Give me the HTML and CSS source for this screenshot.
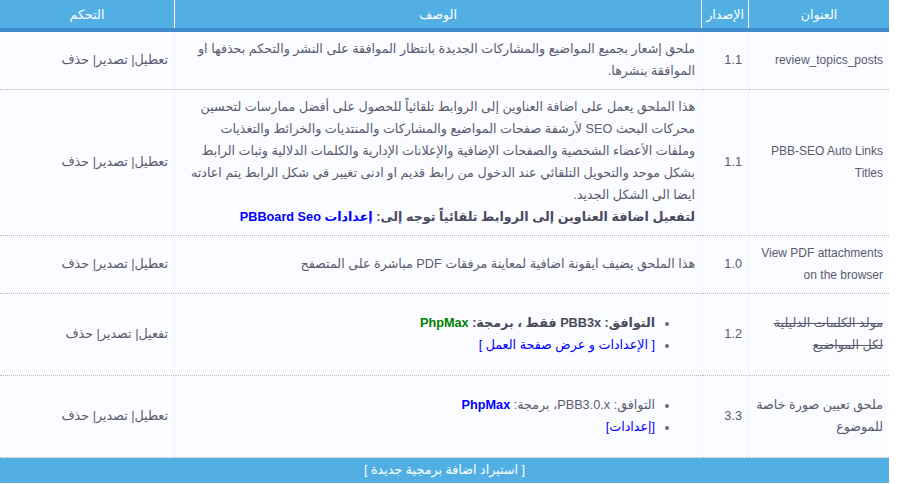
FILE: index.html
```html
<!DOCTYPE html>
<html lang="ar" dir="rtl">

<head>
    <meta charset="UTF-8">
    <title>الإضافات البرمجية</title>
    <link rel="stylesheet" href="styles.css">
</head>

<body>
    <table class="plugins">
        <thead>
            <tr>
                <th class="col-title">العنوان</th>
                <th class="col-version">الإصدار</th>
                <th class="col-desc">الوصف</th>
                <th class="col-control">التحكم</th>
            </tr>
        </thead>
        <tbody>
            <tr>
                <td class="en">review_topics_posts</td>
                <td>1.1</td>
                <td>ملحق إشعار بجميع المواضيع والمشاركات الجديدة بانتظار الموافقة على النشر والتحكم بحذفها او الموافقة بنشرها.</td>
                <td class="control"><a href="#">تعطيل</a>| <a href="#">تصدير</a>| <a href="#">حذف</a></td>
            </tr>
            <tr>
                <td class="en">PBB-SEO Auto Links Titles</td>
                <td>1.1</td>
                <td>هذا الملحق يعمل على اضافة العناوين إلى الروابط تلقائياً للحصول على أفضل ممارسات لتحسين محركات البحث SEO لأرشفة صفحات المواضيع والمشاركات والمنتديات والخرائط والتغذيات وملفات الأعضاء الشخصية والصفحات الإضافية والإعلانات الإدارية والكلمات الدلالية وثبات الرابط بشكل موحد والتحويل التلقائي عند الدخول من رابط قديم او ادنى تغيير في شكل الرابط يتم اعادته ايضا الى الشكل الجديد.<br>
                    <b>لتفعيل اضافة العناوين إلى الروابط تلقائياً توجه إلى: <a href="#" class="blue">إعدادات PBBoard Seo</a></b></td>
                <td class="control"><a href="#">تعطيل</a>| <a href="#">تصدير</a>| <a href="#">حذف</a></td>
            </tr>
            <tr>
                <td class="en">View PDF attachments on the browser</td>
                <td>1.0</td>
                <td>هذا الملحق يضيف ايقونة اضافية لمعاينة مرفقات PDF مباشرة على المتصفح</td>
                <td class="control"><a href="#">تعطيل</a>| <a href="#">تصدير</a>| <a href="#">حذف</a></td>
            </tr>
            <tr>
                <td><s>مولد الكلمات الدليلية لكل المواضيع</s></td>
                <td>1.2</td>
                <td>
                    <ul>
                        <li><b>التوافق: PBB3x فقط ، برمجة: <span class="green">PhpMax</span></b></li>
                        <li><a href="#" class="blue">[ الإعدادات و عرض صفحة العمل ]</a></li>
                    </ul>
                </td>
                <td class="control"><a href="#">تفعيل</a>| <a href="#">تصدير</a>| <a href="#">حذف</a></td>
            </tr>
            <tr>
                <td>ملحق تعيين صورة خاصة للموضوع</td>
                <td>3.3</td>
                <td>
                    <ul>
                        <li>التوافق: PBB3.0.x، برمجة: <b class="blue">PhpMax</b></li>
                        <li><a href="#" class="blue">[إعدادات]</a></li>
                    </ul>
                </td>
                <td class="control"><a href="#">تعطيل</a>| <a href="#">تصدير</a>| <a href="#">حذف</a></td>
            </tr>
        </tbody>
        <tfoot>
            <tr>
                <td colspan="4"><a href="#">[ استيراد اضافة برمجية جديدة ]</a></td>
            </tr>
        </tfoot>
    </table>
</body>

</html>
```

FILE: styles.css
```css
body {
    margin: 0;
    padding: 0;
    background: #fff;
    font-family: "Liberation Sans", "DejaVu Sans", sans-serif;
    font-size: 12.7px;
    color: #5a5a70;
}

.plugins {
    width: 889px;
    margin-right: auto;
    margin-left: 0;
    border-collapse: collapse;
    background: #fbfcff;
}

.plugins th {
    background: #51afe4;
    color: #fff;
    font-weight: normal;
    height: 28px;
    padding: 0 4px;
    text-align: center;
    border-bottom: 4px solid #428bcc;
    border-left: 1px solid #fff;
}

.plugins th:last-child {
    border-left: none;
}

.col-title {
    width: 132px;
}

.col-version {
    width: 37px;
}

.col-control {
    width: 166px;
}

.plugins td {
    padding: 6px 6px 7px;
    line-height: 22px;
    vertical-align: middle;
    text-align: right;
    border-bottom: 1px dotted #bbb;
    border-left: 1px solid #f3f5fa;
}

.plugins td:last-child {
    border-left: none;
}

.plugins td.en {
    font-size: 12px;
}

.plugins a {
    color: #5a5a70;
    text-decoration: none;
}

.plugins ul {
    margin: 12px 0;
    padding-right: 40px;
}

.plugins li {
    line-height: 22px;
}

.plugins li::marker {
    color: #6a6a80;
}

.plugins b {
    color: #4a4a5e;
}

.plugins .blue,
.plugins b.blue {
    color: #0000ff;
}

.green {
    color: #008000;
}

.plugins s {
    text-decoration-thickness: 1px;
}

.plugins tfoot td {
    background: #51afe4;
    text-align: center;
    padding: 0;
    height: 25px;
    line-height: 25px;
    border: none;
}

.plugins tfoot a {
    color: #fff;
}
```
